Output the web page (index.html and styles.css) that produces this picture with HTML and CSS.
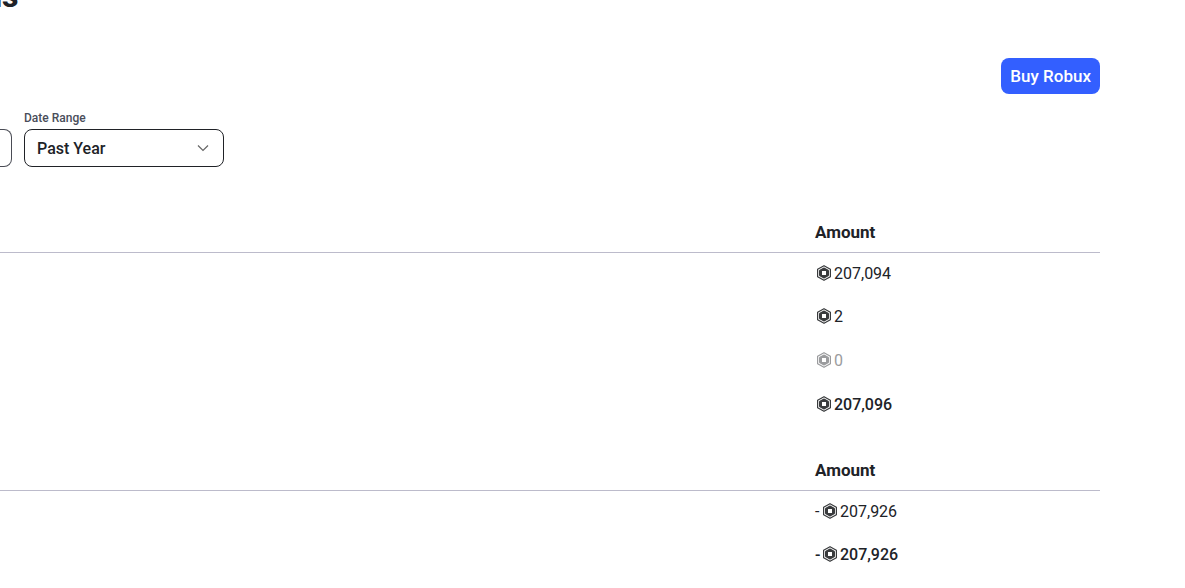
FILE: index.html
```
<!DOCTYPE html>
<html lang="en">
<head>
    <meta charset="UTF-8">
    <meta name="viewport" content="width=device-width, initial-scale=1.0">
    <title>Transactions</title>
    <link rel="stylesheet" href="styles.css">
</head>
<body>
    <!-- Shared icons -->
    <svg class="icon-defs" aria-hidden="true">
        <symbol id="robux" viewBox="0 0 14 16">
            <path d="M7 .7 13.400 4.300v7.400L7 15.300.6 11.700V4.300z" fill="none" stroke="currentColor" stroke-width="1.200" stroke-linejoin="round"/>
            <path fill="currentColor" fill-rule="evenodd" d="M6.300 2.700q.7-.4 1.400 0l3.600 2.100q.7.4.7 1.200v4q0 .8-.7 1.200l-3.600 2.100q-.7.4-1.400 0l-3.600-2.100Q2 10.800 2 10V6q0-.8.7-1.200zM5 6v4h4V6z"/>
        </symbol>
    </svg>

    <main class="page">
        <h1 class="title">ns</h1>

        <div class="actions">
            <button type="button" class="buy-btn">Buy Robux</button>
        </div>

        <div class="filters">
            <button type="button" class="filter-prev" aria-label="Transaction type"></button>
            <div class="field">
                <label for="dateRange">Date Range</label>
                <div class="select-wrap">
                    <select id="dateRange">
                        <option>Past Year</option>
                    </select>
                    <svg class="chevron" viewBox="0 0 12 8" aria-hidden="true"><path d="M1 1.500 6 6.500 11 1.500" fill="none" stroke="currentColor" stroke-width="1.200"/></svg>
                </div>
            </div>
        </div>

        <table class="summary">
            <thead>
                <tr><td></td><th class="amount" scope="col">Amount</th></tr>
            </thead>
            <tbody>
                <tr><td></td><td><span class="value"><svg class="robux"><use href="#robux"/></svg>207,094</span></td></tr>
                <tr><td></td><td><span class="value"><svg class="robux"><use href="#robux"/></svg>2</span></td></tr>
                <tr class="empty"><td></td><td><span class="value"><svg class="robux"><use href="#robux"/></svg>0</span></td></tr>
                <tr class="total"><td></td><td><span class="value"><svg class="robux"><use href="#robux"/></svg>207,096</span></td></tr>
            </tbody>
        </table>

        <table class="summary">
            <thead>
                <tr><td></td><th class="amount" scope="col">Amount</th></tr>
            </thead>
            <tbody>
                <tr><td></td><td><span class="value"><span class="sign">-</span><svg class="robux"><use href="#robux"/></svg>207,926</span></td></tr>
                <tr class="total"><td></td><td><span class="value"><span class="sign">-</span><svg class="robux"><use href="#robux"/></svg>207,926</span></td></tr>
            </tbody>
        </table>
    </main>
</body>
</html>
```
FILE: styles.css
```
* { box-sizing: border-box; }
body { margin: 0; background-color: #fff; color: #202227; font-family: Roboto, Arial, sans-serif; font-size: 16px; overflow: hidden; }
button, select { font-family: inherit; font-size: 16px; font-weight: 500; }

.icon-defs { display: none; }
.page { padding-right: 85px; }

.title { margin: -26px 0 0 -16px; font-size: 32px; line-height: 44px; font-weight: 800; }

.actions { display: flex; justify-content: flex-end; margin-top: 40px; }
.buy-btn { height: 36px; padding: 0 9px; border: none; border-radius: 8px; background-color: #335fff; color: #fff; font-size: 17px; cursor: pointer; }

/* Filters */
.filters { display: flex; align-items: flex-end; gap: 12px; margin-top: 16px; }
.filter-prev { width: 12px; height: 38px; padding: 0; border: 1px solid #4a4c55; border-left: none; border-radius: 0 8px 8px 0; background-color: #fff; }
.field label { display: block; height: 19px; line-height: 16px; font-size: 12px; font-weight: 500; color: #494d5a; }
.select-wrap { position: relative; width: 200px; }
.select-wrap select { display: block; width: 100%; height: 38px; padding: 0 36px 0 12px; border: 1px solid #202227; border-radius: 8px; background-color: #fff; color: #202227; appearance: none; }
.chevron { position: absolute; top: 15px; right: 15px; width: 12px; height: 8px; color: #666; pointer-events: none; }

/* Summary tables */
.summary { width: 100%; table-layout: fixed; border-collapse: collapse; margin-top: 43px; }
.summary + .summary { margin-top: 22px; }
.summary th, .summary td { height: 44px; padding: 0; text-align: left; vertical-align: middle; }
.summary thead tr { border-bottom: 1px solid #bcbbcb; }
.summary thead th, .summary thead td { height: 42px; padding-top: 2px; }
.summary tbody tr:first-child td { height: 42px; }
.summary .amount { width: 285px; font-size: 17px; font-weight: 700; }
.value { display: flex; align-items: center; }
.sign { width: 6px; }
.robux { width: 14px; height: 16px; margin: 0 3px 0 2px; color: #393b3d; }
.empty .value, .empty .robux { color: #9b9c9e; }
.total { font-weight: 500; }
```
